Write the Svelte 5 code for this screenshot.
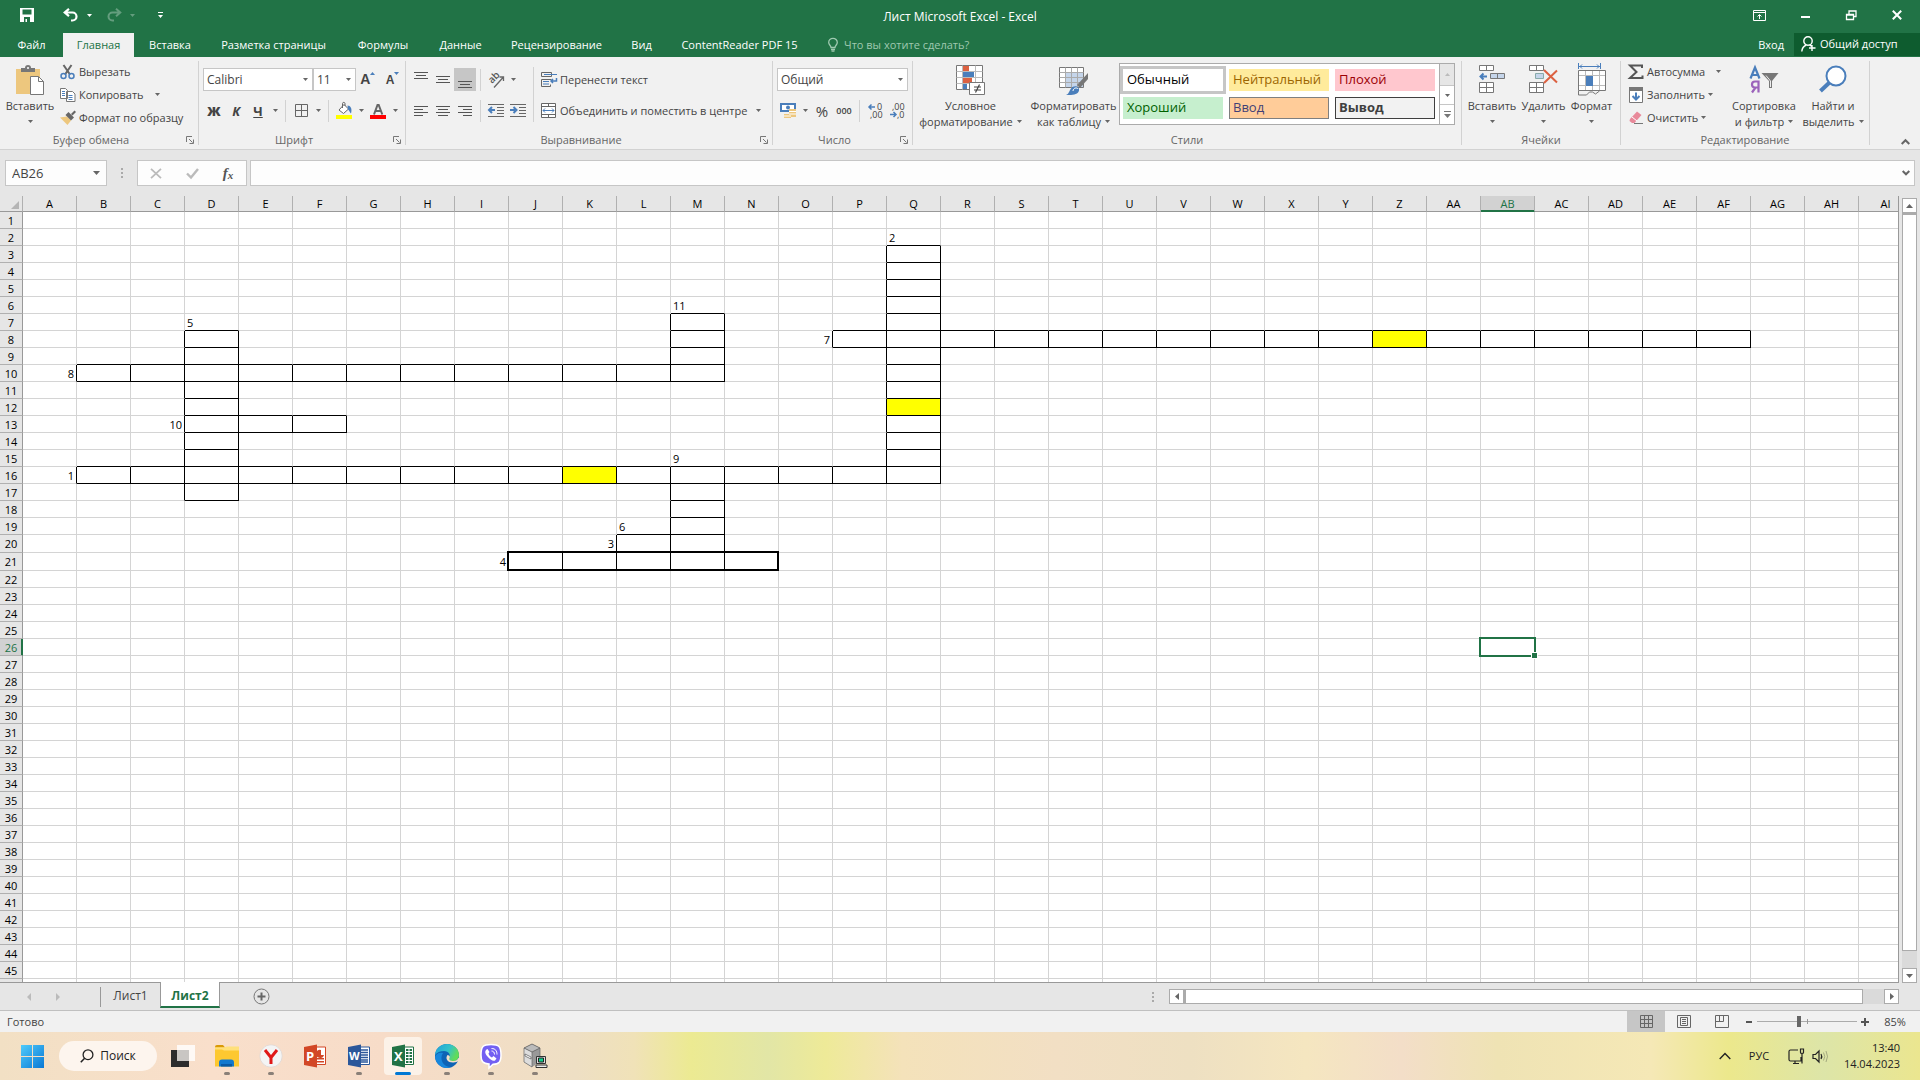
<script>
  const ROWS = 46;
  const COLS = 35;

  function colName(i) {
    return i < 26 ? String.fromCharCode(65 + i) : 'A' + String.fromCharCode(39 + i);
  }
  const cols = Array.from({ length: COLS }, (_, i) => colName(i));
  const rows = Array.from({ length: ROWS }, (_, i) => i + 1);

  // Runs of bordered crossword squares: [first column, last column, first row, last row]
  const runs = [
    ['Q', 'Q', 3, 16],
    ['P', 'AF', 8, 8],
    ['M', 'M', 7, 10],
    ['B', 'M', 10, 10],
    ['D', 'D', 8, 17],
    ['D', 'F', 13, 13],
    ['B', 'Q', 16, 16],
    ['M', 'M', 16, 20],
    ['L', 'M', 20, 20],
    ['J', 'N', 21, 21]
  ].map(([a, b, r1, r2]) => [cols.indexOf(a), cols.indexOf(b), r1, r2]);

  const boxed = (c, r) => runs.some(([a, b, r1, r2]) => c >= a && c <= b && r >= r1 && r <= r2);

  const filled = ['Z8', 'Q12', 'K16'];
  const leftText = { Q2: '2', M6: '11', D7: '5', M15: '9', L19: '6' };
  const rightText = { O8: '7', A10: '8', C13: '10', A16: '1', K20: '3', I21: '4' };

  const grid = rows.map((r) => ({
    r,
    cells: cols.map((name, c) => {
      const id = name + r;
      return {
        id,
        bb: boxed(c, r) || boxed(c, r + 1),
        br: boxed(c, r) || boxed(c + 1, r),
        fill: filled.includes(id),
        end: id in rightText,
        text: leftText[id] ?? rightText[id] ?? ''
      };
    })
  }));

  const tabs = ['Файл', 'Главная', 'Вставка', 'Разметка страницы', 'Формулы', 'Данные', 'Рецензирование', 'Вид', 'ContentReader PDF 15'];
  const styles = [
    ['Обычный', 'normal'],
    ['Нейтральный', 'neutral'],
    ['Плохой', 'bad'],
    ['Хороший', 'good'],
    ['Ввод', 'entry'],
    ['Вывод', 'output']
  ];
</script>

{#snippet tri()}
  <svg class="tri" width="5" height="3" viewBox="0 0 5 3"><path d="M0 0h5L2.5 3z" /></svg>
{/snippet}

{#snippet launcher(name)}
  <button class="launcher" aria-label={name}>
    <svg width="8" height="8" viewBox="0 0 8 8"><path d="M.5 6V.5H6M3 3l3.5 3.500M7.500 3.500v4h-4" fill="none" stroke="#777" /></svg>
  </button>
{/snippet}

{#snippet lines(list)}
  <svg width="16" height="16" viewBox="0 0 16 16">
    {#each list as [x, y, w]}
      <rect {x} {y} width={w} height="1" fill="#555" />
    {/each}
  </svg>
{/snippet}

<div class="app">
  <header class="title">
    <div class="qat">
      <button class="w54" aria-label="Сохранить">
        <svg width="14" height="14" viewBox="0 0 14 14"><path fill="#fff" fill-rule="evenodd" d="M0 0h14v14H0zM2.500 1.500v5h9v-5zM4 9v5h1.500v-3H7v3h3V9z" /></svg>
      </button>
      <button class="w32" aria-label="Отменить">
        <svg width="15" height="14" viewBox="0 0 15 14"><path d="M1.500 4.500h8a4 4 0 0 1 0 8H8M6 .8L1.700 4.500 6 8.200" fill="none" stroke="#fff" stroke-width="2.200" /></svg>
      </button>
      <button class="w6 light" aria-label="Список отмены">{@render tri()}</button>
      <button class="redo faded" aria-label="Вернуть">
        <svg width="15" height="14" viewBox="0 0 15 14"><path d="M13.500 4.500h-8a4 4 0 0 0 0 8H7M9 .8l4.300 3.700L9 8.200" fill="none" stroke="#fff" stroke-width="2" /></svg>
      </button>
      <button class="w6 light faded" aria-label="Список возврата">{@render tri()}</button>
      <button class="w50" aria-label="Настройка панели">
        <svg width="5" height="6" viewBox="0 0 5 6"><path d="M0 0h5v1H0zM0 3h5L2.500 6z" fill="#fff" /></svg>
      </button>
    </div>
    <h1>Лист Microsoft Excel - Excel</h1>
    <div class="winctl">
      <button aria-label="Параметры ленты">
        <svg width="13" height="11" viewBox="0 0 13 11"><path d="M.5.5h12v10H.5zM.5 2.500h12M6.500 9V5M4.500 6.500l2-2 2 2" fill="none" stroke="#fff" /></svg>
      </button>
      <button aria-label="Свернуть"><svg width="9" height="9" viewBox="0 0 9 9"><path d="M0 5h9v2H0z" fill="#fff" /></svg></button>
      <button aria-label="Восстановить">
        <svg width="11" height="11" viewBox="0 0 11 11"><path d="M.5 4.500h7v5h-7zM.5 5h7M3 4V1h7v5.500H8" fill="none" stroke="#fff" stroke-width="1.300" /></svg>
      </button>
      <button aria-label="Закрыть"><svg width="10" height="10" viewBox="0 0 10 10"><path d="M.8.8l8.400 8.400M9.200.8L.8 9.200" stroke="#fff" stroke-width="2" /></svg></button>
    </div>
  </header>

  <nav class="tabs">
    <div class="tablist">
      {#each tabs as t, i}
        <button class:active={i === 1}>{t}</button>
      {/each}
    </div>
    <label class="tell">
      <svg width="10" height="14" viewBox="0 0 10 14"><path d="M3 9.500C3 7.500.7 7 .7 4.600a4.300 4.300 0 0 1 8.600 0C9.300 7 7 7.500 7 9.500zM3 11.500h4M3.500 13.200h3" fill="none" stroke="#9fc9b0" stroke-width="1.300" /></svg>
      <input placeholder="Что вы хотите сделать?" aria-label="Что вы хотите сделать?" />
    </label>
    <button class="login">Вход</button>
    <button class="share">
      <svg width="15" height="16" viewBox="0 0 15 16"><circle cx="7" cy="5" r="4.200" fill="none" stroke="#fff" stroke-width="1.400" /><path d="M.8 15.500c.2-3.500 2-5.500 4.500-6.500M8.500 9l2 1M11 9v6M8 12h6.500" fill="none" stroke="#fff" stroke-width="1.400" /></svg>
      Общий доступ
    </button>
  </nav>

  <section class="ribbon" aria-label="Лента">
    <div class="group g1">
      <div class="body">
        <button class="big paste">
          <svg width="30" height="31" viewBox="0 0 30 31">
            <path d="M1 4h24v25H1z" fill="#edc77e" /><path d="M6 7V3h4a3 3 0 0 1 6 0h4v4z" fill="#777" /><circle cx="13" cy="3" r="1" fill="#fff" />
            <path d="M15.500 11.500h8l5 5v13h-13z" fill="#fff" stroke="#777" /><path d="M23.500 11.500v5h5" fill="none" stroke="#777" />
          </svg>
          <span>Вставить</span>{@render tri()}
        </button>
        <div class="stack">
          <button>
            <svg width="16" height="16" viewBox="0 0 16 16"><path d="M3.500 1l6.500 9.500M11.500 1L5 10.500" stroke="#666" stroke-width="2" fill="none" /><circle cx="3.500" cy="12" r="2.500" fill="none" stroke="#4a7ebb" stroke-width="1.500" /><circle cx="11.500" cy="12" r="2.500" fill="none" stroke="#4a7ebb" stroke-width="1.500" /></svg>
            Вырезать
          </button>
          <button>
            <svg width="16" height="16" viewBox="0 0 16 16"><path d="M.5 1.500h5l2 2v8h-7zM6.500 4.500h6l2.500 2.500v7.500H6.500z" fill="#fff" stroke="#777" /><path d="M2 4.500h3M2 6.500h3M2 8.500h3M8.500 8.500h4M8.500 10.500h4M8.500 12.500h4" stroke="#4a7ebb" /></svg>
            Копировать <span class="after">{@render tri()}</span>
          </button>
          <button>
            <svg width="16" height="16" viewBox="0 0 16 16"><path d="M0 7.500l7-1 4 4-3.500 4.500z" fill="#edc77e" /><path d="M5.500 5l3-3 5.500 5.500-3 3z" fill="#666" /><path d="M11 4l3.500-3.500L16 2l-3.500 3.500z" fill="#666" /></svg>
            Формат по образцу
          </button>
        </div>
      </div>
      <div class="foot"><span>Буфер обмена</span>{@render launcher('Буфер обмена')}</div>
    </div>

    <div class="group g2">
      <div class="body rows">
        <div class="row">
          <label class="combo font"><select aria-label="Шрифт"><option>Calibri</option></select>{@render tri()}</label>
          <label class="combo size"><select aria-label="Размер"><option>11</option></select>{@render tri()}</label>
          <button class="w25 grow" aria-label="Увеличить"><b class="biga">A</b><svg width="5" height="3" viewBox="0 0 5 3"><path d="M0 3h5L2.500 0z" fill="#4a7ebb" /></svg></button>
          <button class="w25 grow" aria-label="Уменьшить"><b class="smalla">A</b><svg width="5" height="3" viewBox="0 0 5 3"><path d="M0 0h5L2.500 3z" fill="#4a7ebb" /></svg></button>
        </div>
        <div class="row">
          <button class="w22 fmt"><b>Ж</b></button>
          <button class="w22 fmt"><i>К</i></button>
          <button class="w22 fmt"><u>Ч</u></button>
          <button class="w12" aria-label="Вид подчёркивания">{@render tri()}</button>
          <span class="sep"></span>
          <button class="w22" aria-label="Границы"><svg width="13" height="13" viewBox="0 0 13 13"><path d="M.5.5h12v12H.5zM6.500.5v12M.5 6.500h12" fill="none" stroke="#666" /></svg></button>
          <button class="w12" aria-label="Все границы">{@render tri()}</button>
          <span class="sep"></span>
          <button class="w22" aria-label="Цвет заливки">
            <svg width="16" height="17" viewBox="0 0 16 17"><path d="M0 13h16v4H0z" fill="#ff0" /><path d="M3 8l5-5.500 4.500 4.500-5 4.500z" fill="#fff" stroke="#666" /><path d="M6.500 6V1.500C6.500 0 9 0 9 1.500V4" fill="none" stroke="#666" /><path d="M11.500 3.500c3 0 5 3 3.500 8-1-.5-1.500-3-3-4z" fill="#4a7ebb" /></svg>
          </button>
          <button class="w12" aria-label="Цвета заливки">{@render tri()}</button>
          <button class="w22" aria-label="Цвет текста">
            <svg width="16" height="17" viewBox="0 0 16 17"><path d="M0 13h16v4H0z" fill="#f00" /><path d="M4 12.500L7.500 3h1.200l3.600 9.500M5.500 9h5.500" fill="none" stroke="#666" stroke-width="2" /></svg>
          </button>
          <button class="w12" aria-label="Цвета текста">{@render tri()}</button>
        </div>
      </div>
      <div class="foot"><span>Шрифт</span>{@render launcher('Шрифт')}</div>
    </div>

    <div class="group g3">
      <div class="body align">
        <div class="rows">
          <div class="row">
            <button class="w22" aria-label="По верхнему краю">{@render lines([[1, 0, 14], [3, 3, 10], [1, 6, 14]])}</button>
            <button class="w22" aria-label="По середине">{@render lines([[1, 4, 14], [3, 7, 10], [1, 10, 14]])}</button>
            <button class="w22 on" aria-label="По нижнему краю">{@render lines([[1, 9, 14], [3, 12, 10], [1, 15, 14]])}</button>
            <span class="sep"></span>
            <button class="w22" aria-label="Ориентация">
              <svg width="16" height="16" viewBox="0 0 16 16"><text transform="translate(4 12) rotate(-45)" font-size="10" font-weight="600" fill="#555">ab</text><path d="M6 15.500L15.500 5M11.500 5h4v4" fill="none" stroke="#666" stroke-width="1.300" /></svg>
            </button>
            <button class="w12" aria-label="Выбор ориентации">{@render tri()}</button>
          </div>
          <div class="row">
            <button class="w22" aria-label="По левому краю">{@render lines([[1, 3, 14], [1, 6, 9], [1, 9, 14], [1, 12, 9]])}</button>
            <button class="w22" aria-label="По центру">{@render lines([[1, 3, 14], [3, 6, 10], [1, 9, 14], [3, 12, 10]])}</button>
            <button class="w22" aria-label="По правому краю">{@render lines([[1, 3, 14], [6, 6, 9], [1, 9, 14], [6, 12, 9]])}</button>
            <span class="sep"></span>
            <button class="w22" aria-label="Уменьшить отступ">
              <svg width="16" height="13" viewBox="0 0 16 13"><path d="M0 .5h16M9 3.500h7M9 6.500h7M9 9.500h7M0 12.500h16" stroke="#666" /><path d="M7 6H2.500M4 3L1 6l3 3" stroke="#4a7ebb" stroke-width="2" fill="none" /></svg>
            </button>
            <button class="w22" aria-label="Увеличить отступ">
              <svg width="16" height="13" viewBox="0 0 16 13"><path d="M0 .5h16M9 3.500h7M9 6.500h7M9 9.500h7M0 12.500h16" stroke="#666" /><path d="M0 6h5M3.500 3l3 3-3 3" stroke="#4a7ebb" stroke-width="2" fill="none" /></svg>
            </button>
          </div>
        </div>
        <span class="tall"></span>
        <div class="rows">
          <div class="row">
            <button class="txt">
              <svg width="16" height="16" viewBox="0 0 16 16"><path d="M.5.500h10v4H.5zM.5 7.500h10M.5 7.500v7h9v-2" fill="none" stroke="#666" /><path d="M3 2.500h13M2 9.500h6M2 12h6" stroke="#4a7ebb" /><path d="M15.500 6v3h-5M12 7l-2 2 2 2" stroke="#4a7ebb" stroke-width="1.500" fill="none" /></svg>
              Перенести текст
            </button>
          </div>
          <div class="row">
            <button class="txt">
              <svg width="16" height="16" viewBox="0 0 16 16"><path d="M.5.5h14v14H.5zM.5 3.500h14M.5 11.500h14M7.500.5v3M7.500 11.500v3" fill="#fff" stroke="#666" /><path d="M2 7.500h11M4 5.500l-2 2 2 2M11 5.500l2 2-2 2" stroke="#4a7ebb" fill="none" /></svg>
              Объединить и поместить в центре
            </button>
            <button class="w22" aria-label="Варианты объединения">{@render tri()}</button>
          </div>
        </div>
      </div>
      <div class="foot"><span>Выравнивание</span>{@render launcher('Выравнивание')}</div>
    </div>

    <div class="group g4">
      <div class="body rows">
        <div class="row">
          <label class="combo num"><select aria-label="Числовой формат"><option>Общий</option></select>{@render tri()}</label>
        </div>
        <div class="row">
          <button class="w22" aria-label="Денежный формат">
            <svg width="16" height="16" viewBox="0 0 16 16"><path d="M0 0h16v9H0z" fill="#4a7ebb" /><path d="M2 2h12v5H2z" fill="#fff" /><circle cx="8" cy="4.500" r="2" fill="#4a7ebb" /><path d="M9 6h7v8H9zM4 11h7v4H4z" fill="#edc77e" /><path d="M9 8.500h7M9 11h7M4 13h7" stroke="#fff" /></svg>
          </button>
          <button class="w12" aria-label="Валюты">{@render tri()}</button>
          <button class="w22 pct">%</button>
          <button class="w22 zeros">000</button>
          <span class="sep"></span>
          <button class="w22" aria-label="Увеличить разрядность"><svg width="15" height="16" viewBox="0 0 15 16"><text x="9" y="7" font-size="9" fill="#444">0</text><text x="2" y="15" font-size="9" fill="#444">,00</text><path d="M7 4H1.500M3.500 1.500L1 4l2.500 2.500" stroke="#4a7ebb" stroke-width="1.500" fill="none" /></svg></button>
          <button class="w22" aria-label="Уменьшить разрядность"><svg width="15" height="16" viewBox="0 0 15 16"><text x="2" y="7" font-size="9" fill="#444">,00</text><text x="7" y="15" font-size="9" fill="#444">,0</text><path d="M0 11.500h5.500M3.500 9L6 11.500 3.500 14" stroke="#4a7ebb" stroke-width="1.500" fill="none" /></svg></button>
        </div>
      </div>
      <div class="foot"><span>Число</span>{@render launcher('Число')}</div>
    </div>

    <div class="group g5">
      <div class="body">
        <button class="big cond">
          <svg width="30" height="31" viewBox="0 0 30 31">
            <path d="M.5.5h26v24H.5z" fill="#fff" stroke="#777" /><path d="M.5 6.500h26M.5 12.500h26M.5 18.500h26M6.500.5v24M19.500.5v24" stroke="#bbb" />
            <path d="M7 1h6v5H7zM7 13h9v5H7z" fill="#dc6141" /><path d="M7 7h11v5H7zM7 19h4v5H7z" fill="#4a7ebb" />
            <path d="M13.500 17.500h15v12h-15z" fill="#fff" stroke="#777" /><path d="M18 22h7M18 25h7M23.500 19.500l-4 8" stroke="#444" stroke-width="1.200" />
          </svg>
          <span>Условное</span><span>форматирование {@render tri()}</span>
        </button>
        <button class="big tbl">
          <svg width="30" height="31" viewBox="0 0 30 31">
            <path d="M.5 2.500h24v20H.5z" fill="#fff" stroke="#777" /><path d="M7 8h17v14H7z" fill="#c5d5ea" /><path d="M.5 7.500h24M.5 12.500h24M.5 17.500h24M6.500 2.500v20M12.500 2.500v20M18.500 2.500v20" stroke="#aaa" />
            <path d="M18 20L29 8v6l-8 9z" fill="#777" /><path d="M7 30c3-1 3-4 5-6.500 3-4 9-2 8 2-1 4-6 5-13 4.500z" fill="#4a7ebb" /><path d="M14 26c0-3 4-4 5-2" stroke="#fff" fill="none" />
          </svg>
          <span>Форматировать</span><span>как таблицу {@render tri()}</span>
        </button>
        <div class="gallery">
          <div class="swatches">
            {#each styles as [label, cls]}
              <button class={cls}>{label}</button>
            {/each}
          </div>
          <div class="galscroll">
            <button class="off" aria-label="Вверх"><svg width="5" height="3" viewBox="0 0 5 3"><path d="M0 3h5L2.500 0z" fill="#bbb" /></svg></button>
            <button aria-label="Вниз">{@render tri()}</button>
            <button aria-label="Дополнительно"><svg width="7" height="7" viewBox="0 0 7 7"><path d="M0 0h7v1H0zM0 3h7L3.500 7z" fill="#777" /></svg></button>
          </div>
        </div>
      </div>
      <div class="foot center"><span>Стили</span></div>
    </div>

    <div class="group g6">
      <div class="body">
        <button class="big ins">
          <svg width="30" height="31" viewBox="0 0 30 31"><path d="M2.500.5h14v5h-14zM9.500.5v5M2.500 17.500h14v10h-14zM9.500 17.500v10M2.500 22.500h14" fill="#fff" stroke="#777" /><path d="M13.500 8.500h14v5h-14zM20.500 8.500v5" fill="#c5d5ea" stroke="#777" /><path d="M10 11.500H4.500M6.500 8.500l-3 3 3 3" fill="none" stroke="#4a7ebb" stroke-width="2" /></svg>
          <span>Вставить</span>{@render tri()}
        </button>
        <button class="big del">
          <svg width="30" height="31" viewBox="0 0 30 31"><path d="M.5.5h14v5H.5zM7.500.5v5M.5 17.500h14v10H.5zM7.500 17.500v10M.5 22.500h14" fill="#fff" stroke="#777" /><path d="M6.500 8.500h8v5h-8z" fill="#c5d5ea" stroke="#8aa" /><path d="M15 5l13 12.500M28 5.500L15 18" fill="none" stroke="#dc6141" stroke-width="2" /></svg>
          <span>Удалить</span>{@render tri()}
        </button>
        <button class="big frm">
          <svg width="30" height="31" viewBox="0 0 30 31"><path d="M1.500 5.500h27v20h-27z" fill="#fff" stroke="#777" /><path d="M2 10.500h26M2 20.500h26M8.500 6v19M15.500 6v19M22.500 6v19" stroke="#bbb" /><path d="M9 11h7v10H9z" fill="#4a7ebb" /><path d="M1.500 26v4h8l3-3h3l3 2 4-3" fill="none" stroke="#777" /><path d="M1.500-2v6M23.500-2v6M2 1.500h21M5-.5l-2 2 2 2M20-.5l2 2-2 2" stroke="#4a7ebb" fill="none" /></svg>
          <span>Формат</span>{@render tri()}
        </button>
      </div>
      <div class="foot center"><span>Ячейки</span></div>
    </div>

    <div class="group g7">
      <div class="body">
        <div class="stack">
          <button>
            <svg width="16" height="16" viewBox="0 0 16 16"><path d="M14 4V1.500H2L8.500 8 2 14h12.500v-2.500" fill="none" stroke="#555" stroke-width="2" /></svg>
            Автосумма <span class="after">{@render tri()}</span>
          </button>
          <button>
            <svg width="16" height="16" viewBox="0 0 16 16"><path d="M1.500.5h13v15h-13z" fill="#fff" stroke="#777" /><path d="M1 0h14v4H1z" fill="#777" /><path d="M8 5.500v7M4.500 9L8 12.500 11.500 9" fill="none" stroke="#4a7ebb" stroke-width="2" /></svg>
            Заполнить <span>{@render tri()}</span>
          </button>
          <button>
            <svg width="16" height="16" viewBox="0 0 16 16"><path d="M2 9l7-7.500L13.500 5 6.500 13H4L1.500 11z" fill="#e8899a" /><path d="M4 7l5 4" stroke="#fff" /><path d="M6 13.500h9" stroke="#777" /></svg>
            Очистить <span>{@render tri()}</span>
          </button>
        </div>
        <button class="big sort">
          <svg width="30" height="31" viewBox="0 0 30 31"><path d="M1.500 13.500L6 2.500l4.500 11M3 10h6" fill="none" stroke="#4a7ebb" stroke-width="2.200" /><path d="M9.500 27.500v-11H6a3 3 0 0 0 0 6h3.500M6.500 22.500L3 27.500" fill="none" stroke="#9b63bb" stroke-width="2.200" /><path d="M12.500 8h17L23 16v7h-3v-7z" fill="#777" /><path d="M17 10.500l4.500 5.500v6" stroke="#eee" fill="none" /></svg>
          <span>Сортировка</span><span>и фильтр {@render tri()}</span>
        </button>
        <button class="big find">
          <svg width="30" height="31" viewBox="0 0 30 31"><circle cx="18" cy="11" r="9.500" fill="#fff" stroke="#4a7ebb" stroke-width="2" /><path d="M11.500 17.500L2.500 26" stroke="#4a7ebb" stroke-width="4" /></svg>
          <span>Найти и</span><span>выделить {@render tri()}</span>
        </button>
      </div>
      <div class="foot center"><span>Редактирование</span></div>
    </div>

    <button class="collapse" aria-label="Свернуть ленту"><svg width="9" height="6" viewBox="0 0 9 6"><path d="M.7 5L4.500 1.200 8.300 5" fill="none" stroke="#666" stroke-width="2" /></svg></button>
  </section>

  <section class="fbar" aria-label="Строка формул">
    <label class="namebox"><input value="AB26" aria-label="Имя" /><svg width="7" height="4" viewBox="0 0 7 4"><path d="M0 0h7L3.500 4z" fill="#666" /></svg></label>
    <span class="dots"><i></i><i></i><i></i></span>
    <div class="fbtns">
      <button aria-label="Отмена"><svg width="12" height="11" viewBox="0 0 12 11"><path d="M1 .8l10 9.400M11 .8L1 10.200" stroke="#bbb" stroke-width="1.800" /></svg></button>
      <button aria-label="Ввод"><svg width="13" height="11" viewBox="0 0 13 11"><path d="M1 5.500l4 4L12 1" stroke="#bbb" stroke-width="2.400" fill="none" /></svg></button>
      <button class="fx"><i>f</i><i class="x">x</i></button>
    </div>
    <label class="formula"><input aria-label="Формула" /><svg width="8" height="6" viewBox="0 0 8 6"><path d="M.7 1L4 4.300 7.300 1" fill="none" stroke="#666" stroke-width="2" /></svg></label>
  </section>

  <main class="sheet">
    <div class="gridwrap">
      <table>
        <colgroup><col class="hcol" />{#each cols as c}<col class="col" />{/each}</colgroup>
        <thead>
          <tr>
            <th class="corner" aria-label="Выделить всё"><svg width="8" height="8" viewBox="0 0 8 8"><path d="M8 0v8H0z" fill="#b5b5b5" /></svg></th>
            {#each cols as c}<th scope="col" class:cur={c === 'AB'}>{c}</th>{/each}
          </tr>
        </thead>
        <tbody>
          {#each grid as row}
            <tr class:taller={row.r === 20 || row.r === 21}>
              <th scope="row" class:cur={row.r === 26}>{row.r < ROWS ? row.r : ''}</th>
              {#each row.cells as cell}
                <td class:bb={cell.bb} class:br={cell.br} class:fill={cell.fill} class:end={cell.end} class:thick={cell.id === 'J21'} class:selected={cell.id === 'AB26'}>{cell.text}</td>
              {/each}
            </tr>
          {/each}
        </tbody>
      </table>
    </div>
    <div class="vscroll">
      <button aria-label="Прокрутить вверх"><svg width="7" height="4" viewBox="0 0 7 4"><path d="M0 4h7L3.500 0z" fill="#666" /></svg></button>
      <div class="vthumb"></div>
      <button aria-label="Прокрутить вниз"><svg width="7" height="4" viewBox="0 0 7 4"><path d="M0 0h7L3.500 4z" fill="#666" /></svg></button>
    </div>
  </main>

  <div class="sheettabs">
    <div class="sheetnav">
      <button aria-label="Предыдущий лист"><svg width="4" height="8" viewBox="0 0 4 8"><path d="M4 0v8L0 4z" fill="#bbb" /></svg></button>
      <button aria-label="Следующий лист"><svg width="4" height="8" viewBox="0 0 4 8"><path d="M0 0v8l4-4z" fill="#bbb" /></svg></button>
    </div>
    <span class="sheetsep"></span>
    <button class="stab">Лист1</button>
    <button class="stab current">Лист2</button>
    <button class="add" aria-label="Новый лист"><svg width="17" height="17" viewBox="0 0 17 17"><circle cx="8.500" cy="8.500" r="7.500" fill="none" stroke="#777" /><path d="M8.500 4.500v8M4.500 8.500h8" stroke="#666" stroke-width="2" /></svg></button>
    <span class="dots hd"><i></i><i></i><i></i></span>
    <div class="hscroll">
      <button aria-label="Прокрутить влево"><svg width="4" height="7" viewBox="0 0 4 7"><path d="M4 0v7L0 3.500z" fill="#666" /></svg></button>
      <div class="hthumb"></div>
      <button aria-label="Прокрутить вправо"><svg width="4" height="7" viewBox="0 0 4 7"><path d="M0 0v7l4-3.500z" fill="#666" /></svg></button>
    </div>
  </div>

  <footer class="status">
    <span class="ready">Готово</span>
    <button class="view on" aria-label="Обычный"><svg width="13" height="13" viewBox="0 0 13 13"><path d="M.5.5h12v12H.5zM4.500.5v12M8.500.5v12M.5 4.500h12M.5 8.500h12" fill="none" stroke="#666" /></svg></button>
    <button class="view" aria-label="Разметка страницы"><svg width="14" height="13" viewBox="0 0 14 13"><path d="M.5.5h13v12H.5zM3.500 2.500h7v8h-7zM5 4.500h4M5 6.500h4M5 8.500h4" fill="none" stroke="#666" /></svg></button>
    <button class="view" aria-label="Страничный режим"><svg width="14" height="13" viewBox="0 0 14 13"><path d="M.5.5h13v12H.5zM4.500.5v6M8.500.5v6M.5 6.500h8" fill="none" stroke="#666" /></svg></button>
    <div class="zoom">
      <button aria-label="Уменьшить"><svg width="8" height="8" viewBox="0 0 8 8"><path d="M1 3h6v2H1z" fill="#555" /></svg></button>
      <input type="range" min="0" max="204" value="85" aria-label="Масштаб" />
      <button aria-label="Увеличить"><svg width="8" height="8" viewBox="0 0 8 8"><path d="M3 0h2v3h3v2H5v3H3V5H0V3h3z" fill="#555" /></svg></button>
    </div>
    <button class="percent">85%</button>
  </footer>

  <div class="taskbar">
    <button class="start" aria-label="Пуск">
      <svg width="23" height="23" viewBox="0 0 23 23"><defs><linearGradient id="wg" x1="0" y1="0" x2="1" y2="1"><stop offset="0" stop-color="#4fcbfb" /><stop offset="1" stop-color="#0a78d4" /></linearGradient></defs><path d="M0 0h11v11H0zM12 0h11v11H12zM0 12h11v11H0zM12 12h11v11H12z" fill="url(#wg)" /></svg>
    </button>
    <button class="search">
      <svg width="14" height="14" viewBox="0 0 14 14"><circle cx="8" cy="5.700" r="4.900" fill="none" stroke="#222" stroke-width="1.300" /><path d="M4.600 9.200L.8 13.300" stroke="#222" stroke-width="1.500" /></svg>
      Поиск
    </button>
    <div class="apps">
      <button aria-label="Представление задач"><svg width="26" height="26" viewBox="0 0 26 26"><path d="M1 7h18v17H1z" fill="#2c2c2c" /><path d="M7 2h18v16H7z" fill="#fff" opacity=".8" /><path d="M7 7h12v11H7z" fill="#c9c6c3" /></svg></button>
      <button class="run" aria-label="Проводник"><svg width="26" height="26" viewBox="0 0 26 26"><path d="M1 4q0-2 2-2h6l2 2.500H1z" fill="#d99a08" /><path d="M1 4.500h24v19H1z" fill="#fdc830" /><path d="M1 4.500h9l3-1h12v4H10L8 6.500H1z" fill="#ffe07a" /><path d="M5 23.500v-4q0-3 3-3h9q3 0 3 3v4z" fill="#1279cf" /><path d="M7 21h11v2.500H7z" fill="#0a5aa5" /></svg></button>
      <button class="run" aria-label="Яндекс"><svg width="26" height="26" viewBox="0 0 26 26"><circle cx="13" cy="13" r="11.200" fill="#f4f4f4" stroke="#d8d0cc" stroke-width=".6" /><path d="M7 7l6 7.500L19 7M13 14v7" fill="none" stroke="#e01818" stroke-width="3" /></svg></button>
      <button aria-label="PowerPoint"><svg width="26" height="26" viewBox="0 0 26 26"><path d="M14 4h9.500v17.500H14z" fill="#fff" stroke="#d24726" /><path d="M19 7a4 4 0 1 0 3 5h-3zM15 15h7v1.500h-7zM15 18h7v1.500h-7z" fill="#d24726" /><path d="M2 4l13-2.500v23L2 22z" fill="#d24726" /><text x="4" y="18" font-size="13" font-weight="700" fill="#fff">P</text></svg></button>
      <button class="run" aria-label="Word"><svg width="26" height="26" viewBox="0 0 26 26"><path d="M14 4h9.500v17.500H14z" fill="#fff" stroke="#2b579a" /><path d="M15 7h7M15 9.500h7M15 12h7M15 14.500h7M15 17h7M15 19h7" stroke="#2b579a" stroke-width="1.300" /><path d="M2 4l13-2.500v23L2 22z" fill="#2b579a" /><text x="3" y="17" font-size="11" font-weight="700" fill="#fff">W</text></svg></button>
      <button class="focus" aria-label="Excel"><svg width="26" height="26" viewBox="0 0 26 26"><path d="M14 4h9.500v17.500H14z" fill="#fff" stroke="#217346" /><path d="M16 7h6M16 10h6M16 13h6M16 16h6M16 19h6" stroke="#217346" stroke-width="1.800" /><path d="M19 5v16" stroke="#fff" /><path d="M2 4l13-2.500v23L2 22z" fill="#217346" /><text x="4" y="18" font-size="13" font-weight="700" fill="#fff">X</text></svg></button>
      <button class="run" aria-label="Edge"><svg width="26" height="26" viewBox="0 0 26 26"><defs><linearGradient id="eg" x1="0" y1="0" x2="1" y2=".4"><stop offset="0" stop-color="#1f9fdc" /><stop offset=".6" stop-color="#33c2c9" /><stop offset="1" stop-color="#62dc58" /></linearGradient></defs><circle cx="13" cy="13" r="12" fill="#0e63b5" /><path d="M1 12C1.500 5 7 1 13 1c7 0 12 5 12 11 0 4-3 6-6 6-3 0-5-1-4-3 2-3 0-7-5-7-4 0-7 1.500-9 4z" fill="url(#eg)" /><path d="M9 10c-4 6 0 14 8 14-6 3-15-1-16-10 1-3 4-5 8-4z" fill="#1887dc" /><path d="M13.500 12c-3 4 1 8 6 7.500 2 0 4-1 5-1.500l2 4 1-8-3 1c-1 2-3 3-5 3-3 0-5-1-4-3 .7-1 .5-2.500-2-3z" fill="#f3dfc8" /></svg></button>
      <button class="run" aria-label="Viber"><svg width="26" height="26" viewBox="0 0 26 26"><path d="M13 1.500c8 0 10 2 10 10.500 0 7-2 9-8 9.300L11 25v-4c-6-.5-8-2.500-8-9 0-8.500 2-10.500 10-10.500z" fill="#7360f2" stroke="#fff" stroke-width="1.500" /><path d="M8.500 6.500c-2 2-1.500 4 1 7 2.500 3 5.500 5 7.500 4l1.500-2-3-2.500-1.500 1.500c-1.500-.5-3-2-3.500-4l1-1.500-2-3z" fill="#fff" /><path d="M13.500 5.500c4 0 5.500 2.500 5.500 6M13.500 8c2 0 3 1.500 3 3.500" fill="none" stroke="#fff" /></svg></button>
      <button class="run" aria-label="Сервер"><svg width="26" height="26" viewBox="0 0 26 26"><path d="M2 5l8-4 8 4v14l-8 5-8-5z" fill="#999" /><path d="M2 5l8 4v15l-8-5z" fill="#ddd" /><path d="M2 5l8-4 8 4-8 4z" fill="#bbb" stroke="#555" stroke-width=".7" /><path d="M2 5v14l8 5V9M18 5v8" fill="none" stroke="#666" stroke-width=".7" /><path d="M3 11l6 3v2l-6-3z" fill="#fff" stroke="#555" stroke-width=".7" /><path d="M14.500 13.500h9v7h-9z" fill="#ddd" stroke="#333" /><path d="M16.500 15h5v4h-5z" fill="#0fd08c" stroke="#222" /><path d="M14 22h11v2.500H14z" fill="#eee" stroke="#333" /></svg></button>
    </div>
    <div class="tray">
      <button aria-label="Скрытые значки"><svg width="12" height="8" viewBox="0 0 12 8"><path d="M.7 7L6 1.500 11.300 7" fill="none" stroke="#222" stroke-width="1.400" /></svg></button>
      <button class="lang">РУС</button>
      <button class="net" aria-label="Сеть и звук">
        <svg width="17" height="17" viewBox="0 0 17 17"><path d="M10 2H2.500Q1 2 1 3.500v8Q1 13 2.500 13H13V9M5 15.500h6M7 13v2.500M12.500 1h3v3.500q0 1-1.500 1t-1.500-1zM14 5.500v10" fill="none" stroke="#222" stroke-width="1.200" /></svg>
        <svg width="17" height="15" viewBox="0 0 17 15"><path d="M1 5.500h2.500L7 2v11L3.500 9.500H1z" fill="none" stroke="#222" stroke-width="1.200" /><path d="M9 5q1.500 2.500 0 5" fill="none" stroke="#222" stroke-width="1.200" /><path d="M11.500 3.500q2.500 4 0 8M14 2q3 5.500 0 11" fill="none" stroke="#222" opacity=".3" /></svg>
      </button>
      <button class="clock"><span>13:40</span><span>14.04.2023</span></button>
    </div>
  </div>
</div>

<style>
  :global(body) { margin: 0; }
  .app { display: flex; flex-direction: column; height: 100vh; overflow: hidden; background: #e6e6e6; font: 11px/16px "Open Sans", "Noto Sans", sans-serif; color: #444; }
  button, input, select { font: inherit; color: inherit; border: 0; background: none; padding: 0; margin: 0; border-radius: 0; outline: 0; min-width: 0; }
  button { display: flex; align-items: center; justify-content: center; white-space: nowrap; }
  svg { flex: none; display: block; overflow: visible; }
  .tri { fill: #666; }
  .light .tri { fill: #fff; }
  .faded { opacity: .3; }
  .w6 { width: 6px; } .w12 { width: 12px; } .w22 { width: 22px; } .w25 { width: 25px; } .w32 { width: 32px; } .w50 { width: 50px; } .w54 { width: 54px; }

  .title { display: grid; grid-template-columns: 1fr auto 1fr; height: 33px; background: #217346; color: #fff; flex: none; font-size: 12px; }
  .qat { display: flex; }
  .qat button, .winctl button { height: 30px; }
  .redo { width: 37px; padding-left: 7px; }
  h1 { font: inherit; margin: 0; line-height: 33px; }
  .winctl { display: flex; justify-content: flex-end; }
  .winctl button { width: 46px; }

  .tabs { display: flex; height: 24px; background: #217346; color: #fff; flex: none; }
  .tablist { display: grid; grid-template-columns: 63px 71px 72px 135px 84px 71px 121px 49px 147px; }
  .tabs button { padding-bottom: 1px; }
  .tabs .active { background: #f1f1f1; color: #217346; }
  .tell { flex: 1; display: flex; align-items: center; gap: 6px; padding-left: 15px; }
  .tell input { flex: 1; }
  .tell input::placeholder { color: #9fc9b0; opacity: 1; }
  .login { padding: 0 10px; }
  .tabs .share { width: 126px; height: 23px; box-sizing: border-box; justify-content: flex-start; gap: 4px; padding-left: 7px; background: #0e5c2f; }

  .ribbon { display: flex; height: 88px; padding-top: 4px; background: #f1f1f1; border-bottom: 1px solid #d2d2d2; flex: none; }
  .group { display: flex; flex-direction: column; height: 84px; border-right: 1px solid #d2d2d2; box-sizing: border-box; flex: none; }
  .g1 { width: 199px; } .g2 { width: 207px; } .g3 { width: 367px; } .g4 { width: 140px; } .g5 { width: 549px; } .g6 { width: 159px; } .g7 { width: 249px; }
  .body { display: flex; height: 70px; box-sizing: border-box; flex: none; }
  .foot { display: flex; align-items: center; height: 10px; padding-top: 4px; color: #666; }
  .foot span { flex: 1; text-align: center; }
  .launcher { width: 16px; height: 12px; }
  .rows { display: flex; flex-direction: column; padding: 7px 0 0 4px; gap: 8px; }
  .row { display: flex; align-items: center; height: 23px; }
  .row button { height: 23px; }
  .big { flex-direction: column; justify-content: flex-start; padding-top: 4px; }
  .big svg:first-child { margin-bottom: 2px; }
  .big span { display: flex; align-items: center; gap: 4px; height: 16px; }
  .big > .tri { margin-top: 6px; }
  .paste { width: 60px; }
  .stack { display: flex; flex-direction: column; }
  .stack button { height: 23px; justify-content: flex-start; gap: 3px; padding-bottom: 2px; }
  .stack .after { padding-left: 8px; }
  .combo { display: grid; height: 23px; box-sizing: border-box; border: 1px solid #c6c6c6; background: #fff; align-items: center; font-size: 12px; }
  .combo > :global(*) { grid-area: 1 / 1; }
  .combo select { appearance: none; height: 21px; padding-left: 3px; width: 100%; }
  .combo .tri { justify-self: end; margin-right: 4px; }
  .font { width: 111px; } .size { width: 43px; } .num { width: 131px; }
  .grow { align-items: flex-start; }
  .biga { font: 700 14px/23px "Liberation Sans", sans-serif; } .smalla { font: 700 12px/24px "Liberation Sans", sans-serif; }
  .grow svg { margin-top: 4px; }
  .fmt { font-size: 13px; font-weight: 700; }
  .sep { width: 1px; height: 22px; margin: 0 4px; background: #d2d2d2; }
  .on { background: #c6c6c6; }
  .tall { width: 1px; height: 55px; margin-top: 6px; background: #d2d2d2; }
  .align > .rows:first-child { width: 123px; }
  .align > .rows:last-child { padding-left: 7px; }
  .txt { gap: 3px; }
  .pct { font-size: 15px; } .zeros { font-size: 9px; font-weight: 600; }
  .cond { width: 115px; } .tbl { width: 91px; }
  .gallery { display: flex; height: 62px; margin-top: 2px; border: 1px solid #ababab; box-sizing: border-box; background: #fff; }
  .swatches { display: grid; grid-template-columns: repeat(3, 100px); grid-auto-rows: 22px; gap: 6px; padding: 5px 4px 5px 3px; }
  .swatches button { box-sizing: border-box; justify-content: flex-start; padding: 0 0 2px 3px; font-size: 13px; border: 1px solid transparent; }
  .normal { color: #000; outline: 3px solid #c6c6c6; }
  .neutral { background: #ffeb9c; color: #9c6500; }
  .bad { background: #ffc7ce; color: #9c0006; }
  .good { background: #c6efce; color: #006100; }
  .swatches .entry { background: #ffcc99; color: #3f3f76; border-color: #7f7f7f; }
  .swatches .output { background: #f2f2f2; color: #3f3f3f; border-color: #3f3f3f; font-weight: 700; }
  .galscroll { display: grid; grid-template-rows: 21px 19px 20px; width: 14px; border-left: 1px solid #ababab; }
  .galscroll button + button { border-top: 1px solid #c6c6c6; }
  .off { background: #e6e6e6; }
  .ins { width: 60px; } .del { width: 43px; } .frm { width: 53px; }
  .g7 .stack { width: 106px; padding-left: 7px; box-sizing: border-box; }
  .sort { width: 74px; } .find { width: 64px; }
  .collapse { margin-left: auto; width: 30px; align-items: flex-end; padding-bottom: 4px; }

  .fbar { display: flex; align-items: center; height: 26px; padding: 10px 5px; flex: none; }
  .namebox, .formula, .fbtns { display: flex; align-items: center; height: 26px; box-sizing: border-box; border: 1px solid #c6c6c6; background: #fdfdfd; }
  .namebox { width: 102px; padding: 0 6px; }
  .namebox input { flex: 1; font-size: 13px; }
  .dots { display: flex; flex-direction: column; gap: 2px; width: 2px; margin: 0 14px; }
  .dots i { width: 2px; height: 2px; background: #aaa; }
  .fbtns { width: 110px; }
  .fbtns button { flex: 1; height: 24px; }
  .fx { font: italic 700 15px/20px "Liberation Serif", serif; color: #555; }
  .x { font-size: 11px; padding-top: 4px; }
  .formula { flex: 1; margin-left: 3px; padding: 0 4px; }
  .formula input { flex: 1; }

  .sheet { display: flex; flex: 1; min-height: 0; }
  .gridwrap { flex: 1; min-width: 0; overflow: hidden; background: #fff; border-right: 1px solid #999; border-bottom: 1px solid #999; }
  table { table-layout: fixed; width: 0; border-collapse: separate; border-spacing: 0; font-size: 11px; line-height: 15px; color: #000; }
  .hcol { width: 23px; } .col { width: 54px; }
  th, td { box-sizing: border-box; padding: 0; height: 17px; }
  th { background: #e6e6e6; font-weight: 400; text-align: center; border-style: solid; border-color: #b0b0b0 #999; border-width: 0 1px 1px 0; }
  thead th { height: 16px; border-color: #999 #b0b0b0; line-height: 15px; }
  .corner svg { margin: 2px 3px 0 auto; }
  thead .cur { background: #d2d2d2; color: #217346; box-shadow: inset 0 -1px #217346; border-bottom-color: #217346; }
  tbody .cur { background: #d2d2d2; color: #217346; box-shadow: inset -1px 0 #217346; border-right-color: #217346; }
  td { position: relative; border-right: 1px solid #d4d4d4; border-bottom: 1px solid #d4d4d4; padding: 1px 2px 0; vertical-align: top; }
  .taller td, .taller th { height: 18px; }
  .bb { border-bottom-color: #000; }
  .br { border-right-color: #000; }
  .fill { background: #ff0; }
  .end { text-align: right; }
  .thick::after { content: ""; position: absolute; left: -2px; top: -2px; width: 272px; height: 20px; box-sizing: border-box; border: 2px solid #000; z-index: 1; }
  .selected::before { content: ""; position: absolute; inset: -2px; border: 2px solid #217346; z-index: 1; }
  .selected::after { content: ""; position: absolute; right: -3px; bottom: -3px; width: 5px; height: 5px; background: #217346; outline: 1px solid #fff; z-index: 2; }
  .vscroll { display: flex; flex-direction: column; width: 15px; margin: 2px 3px 0; background: #dadada; }
  .vscroll button, .hscroll button { width: 15px; height: 15px; box-sizing: border-box; border: 1px solid #ababab; background: #fff; flex: none; }
  .vthumb { flex: 1; margin-bottom: 17px; border: 1px solid #ababab; border-top: 2px solid #ababab; background: #fff; }

  .sheettabs { display: flex; align-items: center; height: 27px; border-bottom: 1px solid #c0c0c0; flex: none; }
  .sheetnav { display: flex; width: 100px; padding-left: 14px; box-sizing: border-box; flex: none; }
  .sheetnav button { width: 29px; height: 20px; }
  .sheetsep { width: 1px; height: 20px; background: #999; flex: none; }
  .stab { width: 59px; height: 25px; font-size: 12px; align-self: flex-start; box-sizing: border-box; }
  .current { width: 60px; height: 26px; margin-top: -1px; padding-top: 3px; background: #fff; color: #217346; font-weight: 700; border-left: 1px solid #999; border-right: 1px solid #999; border-bottom: 2px solid #217346; }
  .add { width: 82px; height: 25px; }
  .hd { margin: 0 15px 0 auto; }
  .hscroll { display: flex; width: 38%; margin-right: 21px; background: #dadada; }
  .hthumb { flex: 1; margin-right: 21px; border: 1px solid #ababab; border-left-width: 2px; background: #fff; }

  .status { display: flex; align-items: center; height: 21px; background: #f1f1f1; flex: none; }
  .ready { flex: 1; padding-left: 7px; }
  .view { width: 38px; height: 21px; }
  .zoom { display: flex; align-items: center; gap: 3px; margin-left: 3px; }
  .zoom button { width: 10px; }
  .zoom input { appearance: none; width: 100px; height: 11px; background: linear-gradient(#999, #999) 50px 3px / 1px 5px no-repeat, linear-gradient(#ababab, #ababab) 0 5px / 100% 1px no-repeat; }
  .zoom input::-webkit-slider-thumb { appearance: none; width: 4px; height: 11px; background: #666; }
  .percent { width: 50px; }

  .taskbar { display: flex; align-items: center; height: 48px; flex: none; color: #222; background: linear-gradient(90deg, #f2e0c4 0, #f9dfcb 11%, #f7dcc8 20%, #eedfc4 30%, #f0e2b8 33%, #ecea92 36%, #e2e6a6 40%, #eeea98 43%, #f4e2ba 47%, #f2dfc4 55%, #eee0c2 62%, #f5e6c0 68%, #f3dec8 73%, #efe3b4 78%, #f5e8b6 86%, #ece88c 90%, #dde5a8 95%, #ebe68f 100%); }
  .start { width: 53px; height: 48px; margin-left: 6px; }
  .search { width: 98px; height: 30px; border-radius: 15px; background: #fdf5ee; gap: 6px; font-size: 12px; }
  .apps { display: flex; gap: 6px; padding-left: 7px; }
  .apps button { width: 38px; height: 38px; position: relative; border-radius: 4px; }
  .focus { background: #fcf2e8; }
  .run::after, .focus::after { content: ""; position: absolute; bottom: 0; width: 6px; height: 3px; border-radius: 2px; background: #8a8078; }
  .focus::after { width: 16px; background: #0078d4; }
  .tray { display: flex; align-items: center; margin-left: auto; padding-right: 20px; }
  .lang { width: 44px; margin-left: 6px; }
  .net { gap: 7px; margin-left: 7px; }
  .clock { flex-direction: column; align-items: flex-end; width: 71px; }
</style>
